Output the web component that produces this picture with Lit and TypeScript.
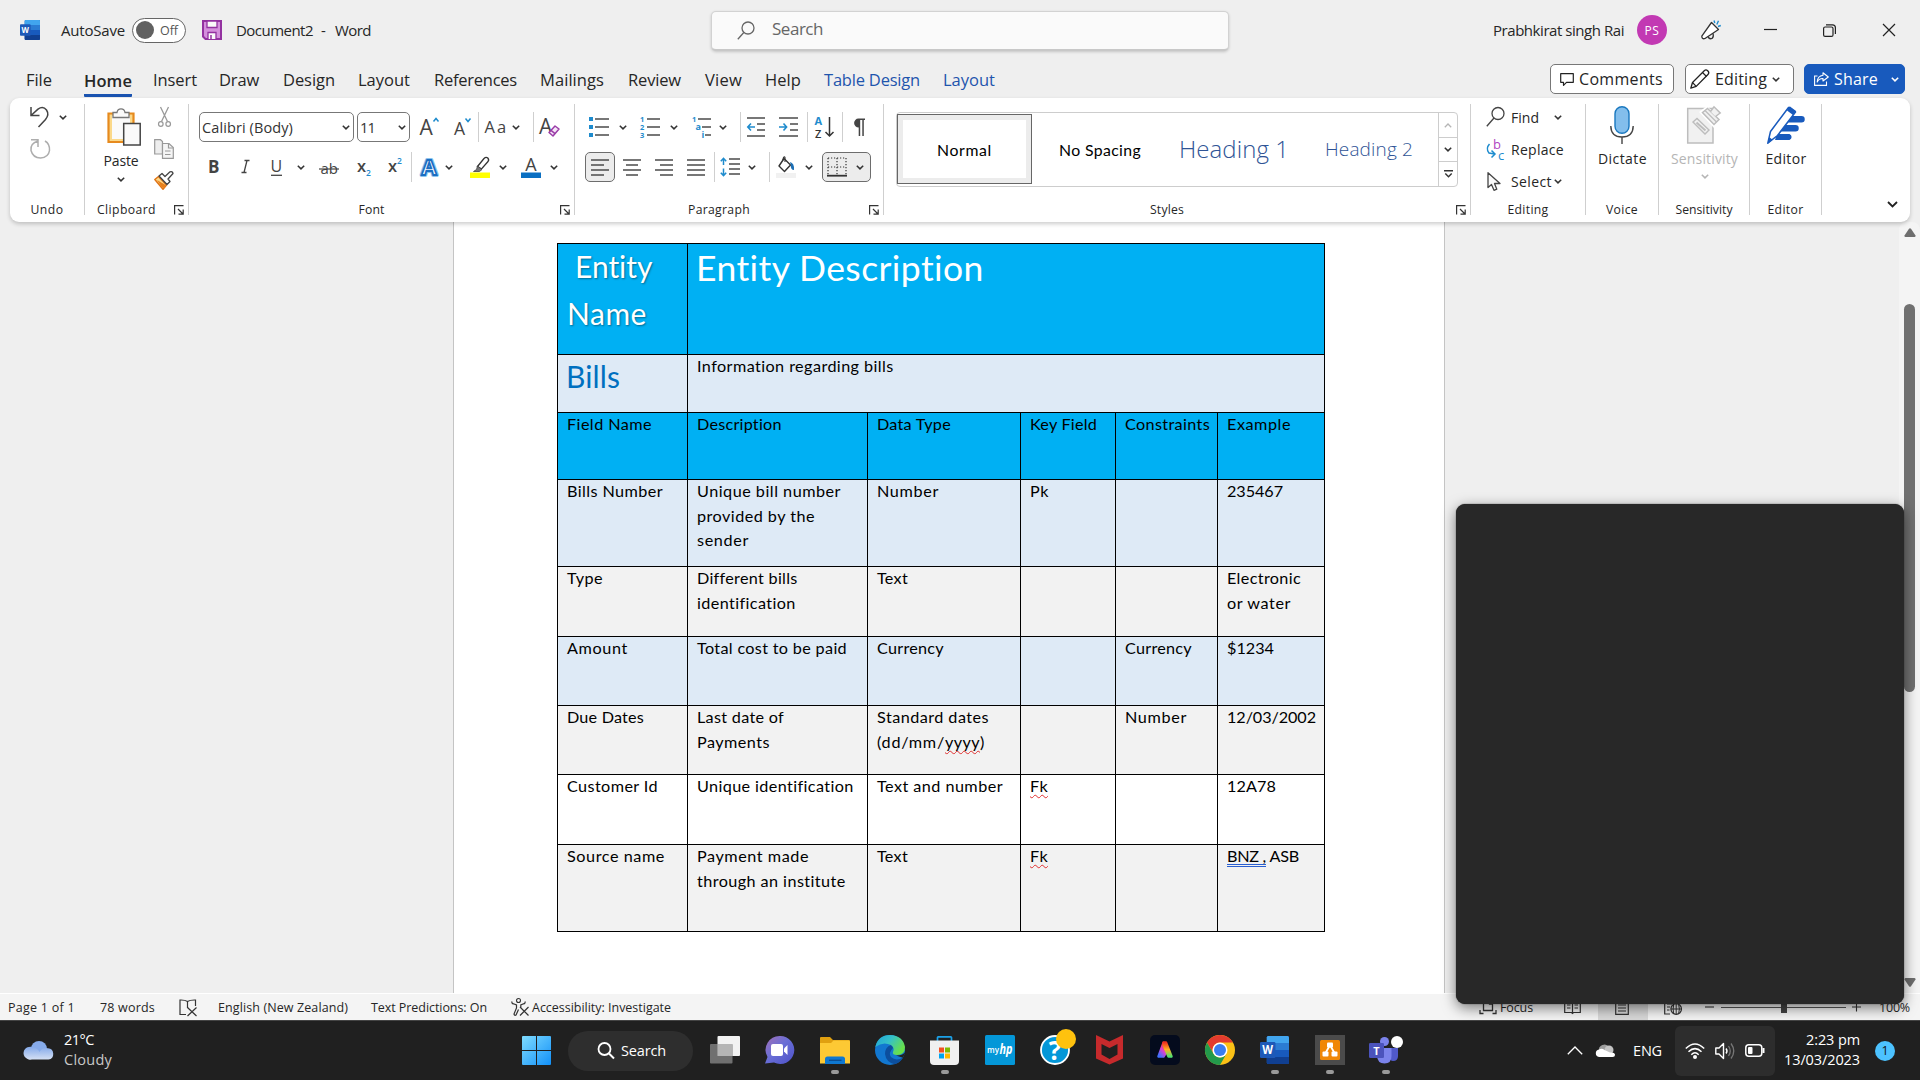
import { LitElement, html, svg, css, nothing } from "lit";
import { customElement } from "lit/decorators.js";

/* ---------- shared helpers ---------- */

const shared = css`
  :host { display: block; box-sizing: border-box; font-family: "Open Sans", "Noto Sans", sans-serif; color: #262626; }
  * { box-sizing: border-box; }
  svg { display: block; overflow: visible; flex: none; }
  .tx { display: inline-block; white-space: pre; }
  .strip { display: grid; align-items: center; justify-items: start; }
`;

/** Text whose tracking is computed so that it spans the given width. */
const tx = (s: string, w: number) => html`<span class="tx" data-w=${w}>${s}</span>`;

class FittedElement extends LitElement {
  protected firstUpdated() {
    this.renderRoot.querySelectorAll<HTMLElement>("[data-w]").forEach((el) => {
      const n = (el.textContent || "").length;
      const natural = el.getBoundingClientRect().width;
      const target = Number(el.dataset.w) + 1;
      if (n > 1) el.style.letterSpacing = `${((target - natural) / n).toFixed(3)}px`;
    });
  }
}

const ic = (w: number, h: number, body: unknown) =>
  html`<svg width=${w} height=${h} viewBox=${`0 0 ${w} ${h}`} fill="none" aria-hidden="true">${body}</svg>`;

const chev = (color = "#333", w = 8) =>
  ic(w, 5, svg`<path d=${`M.8 .7 L${w / 2} ${w / 2 - 0.1} L${w - 0.8} .7`} stroke=${color} stroke-width="1.5"/>`);
const sep = html`<span class="sep"></span>`;

const D = "#444";
const B = "#1e8bcd";
const G = "#adadad";

const wordLogo = (w: number, h: number) => html`<svg width=${w} height=${h} viewBox="0 0 30 28" preserveAspectRatio="none">
  <rect x="7" y="0" width="23" height="28" rx="1.5" fill="#185abd"/>
  <path d="M8.500 0H28.500Q30 0 30 1.500V7H7V1.500Q7 0 8.500 0Z" fill="#41a5ee"/>
  <rect x="7" y="7" width="23" height="7" fill="#2b7cd3"/>
  <rect x="7" y="14" width="23" height="7" fill="#185abd"/>
  <path d="M7 21H30V26.500Q30 28 28.500 28H8.500Q7 28 7 26.500Z" fill="#103f91"/>
  <rect x="0" y="6" width="16" height="16" rx="1.300" fill="#1d59b8"/>
  <text x="8" y="18.300" text-anchor="middle" font-family="Open Sans" font-weight="700" font-size="11.500" fill="#fff">W</text>
</svg>`;

/* ---------- title bar and tabs ---------- */

@customElement("word-titlebar")
class WordTitlebar extends FittedElement {
  static styles = [shared, css`
    .title { height: 60px; padding-left: 20px; font-size: 15px;
      grid-template-columns: 41px 71px 70px 34px 85px 14px 376px 782px 144px 64px 63px 59px 60px 1fr; }
    .toggle { width: 54px; height: 25px; border: 1.3px solid #666; border-radius: 13px; background: #fff; display: flex; align-items: center; padding-left: 3px; gap: 6px; font-size: 12.500px; color: #555; }
    .knob { width: 18px; height: 18px; border-radius: 50%; background: #616161; }
    .search { width: 518px; height: 40px; margin-top: 1px; background: #fafafa; border: 1px solid #d2d2d2; border-bottom: 2px solid #c8c8c8; border-radius: 5px; box-shadow: 0 1px 3px rgba(0,0,0,.18); display: flex; align-items: center; padding-left: 25px; gap: 17px; font-size: 17px; color: #666; }
    .search .tx { margin-top: -3px; }
    .avatar { width: 30px; height: 30px; border-radius: 50%; background: #c239b3; color: #fff; display: grid; place-items: center; font-size: 12px; }
    .tabs { height: 38px; padding-left: 26px; font-size: 16.500px;
      grid-template-columns: 58px 69px 66px 64px 75px 76px 106px 88px 77px 60px 59px 119px 607px 135px 119px 1fr; }
    .tab { padding-top: 0; }
    .on { font-weight: 600; border-bottom: 3px solid #1a53b0; border-radius: 1px; height: 35px; display: flex; align-items: center; padding-top: 6px; width: 48px; }
    .blue { color: #1f55ad; }
    .btn { height: 30px; border: 1px solid #777; border-radius: 5px; background: #fff; display: flex; align-items: center; font-size: 16px; }
    .comments { width: 124px; padding-left: 9px; gap: 5px; }
    .editing { width: 109px; padding-left: 4px; gap: 5px; }
    .share { width: 101px; padding-left: 9px; gap: 5px; background: #185abd; border-color: #185abd; color: #fff; }
    .share .last { margin-left: 8px; }
  `];
  render() {
    return html`
      <div class="strip title">
        ${wordLogo(20, 20)}
        ${tx("AutoSave", 63)}
        <div class="toggle"><span class="knob"></span>${tx("Off", 17)}</div>
        ${ic(20, 20, svg`<path d="M1 1H19V19H3.500L1 16.500Z" fill="#d48fdc" stroke="#9332a0" stroke-width="2"/><path d="M5 1H15V7.500H5Z" fill="#fafafa" stroke="#9332a0" stroke-width="1.300"/><path d="M6 19V12.500H14V19" fill="#fafafa" stroke="#9332a0" stroke-width="1.300"/><path d="M9 15V19" stroke="#9332a0" stroke-width="1.500"/>`)}
        ${tx("Document2", 76)}
        ${tx("-", 5)}
        ${tx("Word", 35)}
        <div class="search">
          ${ic(18, 19, svg`<circle cx="11" cy="7" r="6" stroke="#666" stroke-width="1.300"/><path d="M6.800 11.500L.8 18.300" stroke="#666" stroke-width="1.300"/>`)}
          ${tx("Search", 50)}
        </div>
        ${tx("Prabhkirat singh Rai", 130)}
        <div class="avatar">${tx("PS", 14)}</div>
        ${ic(20, 20, svg`<path d="M10.500 2.500L17.500 9.500L4 18.500Q1 19.500 .8 16.200Z" fill="#fff" stroke="#333" stroke-width="1.300" stroke-linejoin="round"/><path d="M7 16.500Q8 19.500 11 18.500Q13 17 12 13.300" stroke="#333" stroke-width="1.300"/><path d="M13 .5L13.800 3M17.500 .8L15.800 4.500M19.800 5.500L17 6.500" stroke="#1e8bcd" stroke-width="1.400"/>`)}
        ${ic(13, 12, svg`<path d="M0 5.500H13" stroke="#222" stroke-width="1.200"/>`)}
        ${ic(13, 13, svg`<rect x=".6" y="3" width="9.400" height="9.400" rx="1.500" stroke="#222" stroke-width="1.200"/><path d="M3 .8H9.500Q12.400 .8 12.400 3.700V10" stroke="#222" stroke-width="1.200"/>`)}
        ${ic(12, 12, svg`<path d="M0 0L12 12M12 0L0 12" stroke="#222" stroke-width="1.200"/>`)}
      </div>
      <div class="strip tabs">
        <span class="tab">${tx("File", 25)}</span>
        <span class="on">${tx("Home", 47)}</span>
        <span class="tab">${tx("Insert", 43)}</span>
        <span class="tab">${tx("Draw", 39)}</span>
        <span class="tab">${tx("Design", 51)}</span>
        <span class="tab">${tx("Layout", 51)}</span>
        <span class="tab">${tx("References", 82)}</span>
        <span class="tab">${tx("Mailings", 63)}</span>
        <span class="tab">${tx("Review", 52)}</span>
        <span class="tab">${tx("View", 36)}</span>
        <span class="tab">${tx("Help", 35)}</span>
        <span class="tab blue">${tx("Table Design", 95)}</span>
        <span class="tab blue">${tx("Layout", 51)}</span>
        <div class="btn comments">
          ${ic(14, 13, svg`<path d="M.7 .7H13.300V9.300H6.500L3.500 12.300V9.300H.7Z" stroke="#222" stroke-width="1.200" stroke-linejoin="round"/>`)}
          ${tx("Comments", 83)}
        </div>
        <div class="btn editing">
          ${ic(20, 20, svg`<path d="M.8 19.200L2.500 13.500L14.500 1.500Q16 .2 17.700 1.700Q19.600 3.500 18.200 5.200L6.200 17.400Z" stroke="#222" stroke-width="1.300" stroke-linejoin="round"/><path d="M12.500 3.500L16.500 7.500M2.500 13.500L6.200 17.400" stroke="#222" stroke-width="1.200"/>`)}
          ${tx("Editing", 51)}${chev("#333", 8)}
        </div>
        <div class="btn share">
          ${ic(15, 14, svg`<path d="M3.500 4H.6V13.400H12.500V9.500" stroke="#fff" stroke-width="1.100"/><path d="M9 .8L14.300 5L9 9V6.500Q5 6.300 3.200 10Q3.500 4 9 3.300Z" stroke="#fff" stroke-width="1.100" stroke-linejoin="round"/>`)}
          ${tx("Share", 43)}<span class="last">${chev("#fff", 8)}</span>
        </div>
      </div>`;
  }
}

/* ---------- ribbon icons ---------- */

const lines = (w: number, ys: [number, number, number][], c = "#555") =>
  svg`${ys.map(([x, y, l]) => svg`<path d=${`M${x} ${y}h${l}`} stroke=${c} stroke-width="1.600"/>`)}`;

const alignLeft = ic(18, 18, lines(18, [[0, 2, 18], [0, 7, 13], [0, 12, 18], [0, 17, 13]]));
const alignCenter = ic(18, 18, lines(18, [[0, 2, 18], [3, 7, 12], [0, 12, 18], [3, 17, 12]]));
const alignRight = ic(18, 18, lines(18, [[0, 2, 18], [5, 7, 13], [0, 12, 18], [5, 17, 13]]));
const justify = ic(18, 18, lines(18, [[0, 2, 18], [0, 7, 18], [0, 12, 18], [0, 17, 18]]));

const tn = (x: number, y: number, s: string, size: number, fill: string, weight = "400", extra = "") =>
  svg`<text x=${x} y=${y} font-size=${size} fill=${fill} font-weight=${weight} font-style=${extra || "normal"} font-family="Open Sans, sans-serif">${s}</text>`;

const bullets = ic(20, 20, svg`<rect x="0" y="0" width="4" height="4" fill=${B}/><rect x="0" y="8" width="4" height="4" fill=${B}/><rect x="0" y="16" width="4" height="4" fill=${B}/>${lines(20, [[6, 2, 14], [6, 10, 14], [6, 18, 14]])}`);
const numbering = ic(20, 20, svg`${tn(0, 5, "1", 7.5, B, "700")}${tn(0, 13, "2", 7.5, B, "700")}${tn(0, 21, "3", 7.5, B, "700")}${lines(20, [[7, 2, 13], [7, 10, 13], [7, 18, 13]])}`);
const multilevel = ic(20, 20, svg`${tn(0, 5, "1", 7.5, B, "700")}${tn(3.5, 13, "a", 9, B, "700")}${tn(9.5, 21, "i", 9, B, "700")}${lines(20, [[6, 2, 13], [10, 10, 9], [13, 18, 6]])}`);
const outdent = ic(19, 20, svg`${lines(19, [[0, 1, 18], [10, 7, 8], [10, 13, 8], [0, 19, 18]])}<path d="M8 10H1M4 6.500L.8 10L4 13.500" stroke=${B} stroke-width="1.600"/>`);
const indent = ic(20, 20, svg`${lines(19, [[0, 1, 19], [11, 7, 8], [11, 13, 8], [0, 19, 19]])}<path d="M0 10H7M4.500 6.500L7.600 10L4.500 13.500" stroke=${B} stroke-width="1.600"/>`);
const sortIcon = ic(20, 22, svg`${tn(0.5, 9, "A", 11, B, "700")}${tn(1, 21.5, "Z", 11, "#333", "600")}<path d="M15.500 1V20M11.500 16L15.500 20L19.500 16" stroke="#333" stroke-width="1.500"/>`);
const pilcrow = ic(13, 18, svg`<path d="M6.500 .5H13V2H11.800V18H10.300V2H8.200V18H6.700V9.500A4.500 4.500 0 0 1 6.500 .5Z" fill="#444"/>`);
const spacing = ic(21, 20, svg`${lines(20, [[9, 2, 11], [9, 7, 11], [9, 12, 11], [9, 17, 11]])}<path d="M3.500 1.500V8M.8 4.200L3.500 1.300L6.200 4.200M3.500 11.500V18.500M.8 15.700L3.500 18.600L6.200 15.700" stroke=${B} stroke-width="1.500"/>`);
const shading = ic(20, 22, svg`<path d="M8 2.500L14.500 9L8.500 15.500L3 10Z" stroke="#333" stroke-width="1.400" stroke-linejoin="round"/><path d="M9 6V1.500Q8.500 0 7.500 1.500L6.500 5" stroke="#333" stroke-width="1.100"/><path d="M14 6Q18.500 7 18 14Q14.500 14 14.800 9Z" fill="#1c6fb5"/><rect x="0" y="17" width="20" height="5" fill="#f1f1f1"/>`);
const borders = ic(20, 20, svg`<path d="M1 1H19M1 10H19M1 1V18M10 1V18M19 1V18" stroke="#333" stroke-width="1.200" stroke-dasharray="1.200 1.800"/><path d="M0 18.700H20" stroke="#333" stroke-width="1.800"/>`);

const clearFmt = ic(20, 20, svg`${tn(-1, 17, "A", 21, D)}<path d="M9 15.500L15 9L19 12L13 19Z" fill="#f5e6f7" stroke="#9b3da8" stroke-width="1.500" stroke-linejoin="round"/><path d="M11 13.300L15.300 16.800" stroke="#9b3da8" stroke-width="1.500"/>`);
const grow = ic(20, 22, svg`${tn(-0.5, 19, "A", 21, D)}<path d="M13.500 5.500L16 2.500L18.500 5.500" stroke=${B} stroke-width="1.500"/>`);
const shrink = ic(20, 22, svg`${tn(0, 19, "A", 17.5, D)}<path d="M11.500 2.500L14 5.500L16.500 2.500" stroke=${B} stroke-width="1.500"/>`);
const changeCase = ic(22, 20, svg`${tn(-0.5, 16, "A", 16.5, D)}${tn(12, 16, "a", 16.5, D)}`);
const bold = ic(12, 20, tn(0, 15.5, "B", 17, D, "700"));
const italic = ic(12, 20, svg`<path d="M3.500 3.500H8.500M.5 15.500H5.500M6 3.500L3 15.500" stroke=${D} stroke-width="1.300"/>`);
const underline = ic(14, 20, svg`${tn(0.5, 15, "U", 16, D)}<path d="M1 18.300H12" stroke=${D} stroke-width="1.300"/>`);
const strike = ic(20, 20, svg`${tn(1.5, 16.5, "ab", 15, D)}<path d="M0 12H20" stroke=${D} stroke-width="1.200"/>`);
const subscript = ic(16, 22, svg`${tn(0, 16, "x", 16.5, D, "600")}${tn(9, 20, "2", 8.5, B, "600")}`);
const superscript = ic(16, 22, svg`${tn(0, 16, "x", 16.5, D, "600")}${tn(9, 8, "2", 8.5, B, "600")}`);
const effects = html`<svg width="20" height="22" viewBox="0 0 20 22"><text x="1.500" y="19" font-size="22" font-family="Open Sans" font-weight="700" fill="#fff" stroke="#8cc4ee" stroke-width="4" stroke-linejoin="round">A</text><text x="1.500" y="19" font-size="22" font-family="Open Sans" font-weight="700" fill="#fff" stroke="#1b6ec2" stroke-width="1.800">A</text></svg>`;
const highlight = ic(20, 21, svg`<path d="M7.500 9.500L14 1.500Q16 -.5 17.800 1Q19.500 3 17.800 4.800L11.500 12L7.500 9.500Z" stroke="#333" stroke-width="1.300"/><path d="M7.500 9L12 12.500L9.500 14.500H3.500L6.500 12.500Z" fill="#777" stroke="#444" stroke-width=".8"/><rect x="0" y="15.500" width="20" height="5.500" fill="#ff0"/>`);
const fontColor = ic(20, 21, svg`${tn(4.2, 13.5, "A", 18, D)}<rect x="0" y="15.500" width="20" height="5.500" fill="#0a6fc2"/>`);

const undo = ic(19, 20, svg`<path d="M1 0V8.500H9.500M1 8.500L8 2.200Q13 -1.500 16.500 3Q19.500 7.500 15.500 12.500L8.500 20" stroke="#444" stroke-width="1.500"/>`);
const redo = ic(21, 20, svg`<path d="M1 .8H8V8M8 .8L7.800 2Q0 4.500 1 11.500Q3 19 10.500 19Q18.500 18.500 19.500 11.500Q20 5 15 2" stroke=${G} stroke-width="1.500"/>`);
const paste = ic(34, 38, svg`<path d="M1.500 5.500H26.500V34H1.500Z" fill="#fbd98a" stroke="#e68a1e" stroke-width="2.200"/><rect x="5" y="8" width="18" height="23" fill="#fafafa"/><path d="M6 9.500V4.500H10Q10.500 .8 14 .8T18 4.500H22V9.500Z" fill="#fafafa" stroke="#777" stroke-width="1.300"/><rect x="16.700" y="15.500" width="16.500" height="21.500" fill="#fafafa" stroke="#444" stroke-width="1.500"/>`);
const cut = ic(13, 20, svg`<path d="M2.500 0L9.500 14.500M10.500 0L3.500 14.500" stroke="#999" stroke-width="1.300"/><circle cx="2.800" cy="17" r="2.300" stroke="#999" stroke-width="1.200"/><circle cx="10.200" cy="17" r="2.300" stroke="#999" stroke-width="1.200"/>`);
const copy = ic(20, 20, svg`<path d="M.7 .7H6.500L8.500 2.500V15H.7Z" fill="#eee" stroke="#999" stroke-width="1.200"/><path d="M8.500 4.500H15L19.300 8.500V19.300H8.500Z" fill="#f5f5f5" stroke="#999" stroke-width="1.200"/><path d="M14.500 4.500V9H19M11 12H16.500M11 15.500H16.500" stroke="#999" stroke-width="1.200"/>`);
const painter = ic(20, 19, svg`<path d="M.8 8.500L4.500 5.500L12.500 14L9 18.200Z" fill="#fbd98a" stroke="#e07416" stroke-width="1.500" stroke-linejoin="round"/><path d="M3 9L8 16.500L10.500 17L11.500 14Z" fill="#e8801c"/><path d="M5 5L8 2.500L11 5.500L16 .8Q18.500 0 19 2.500L14 8L16 10.500L13 13.500Z" fill="#fff" stroke="#444" stroke-width="1.300" stroke-linejoin="round"/>`);
const launcher = ic(10, 10, svg`<path d="M9.500 .6H.6V9.500M4 4L8.500 8.500M9.200 4.500V9.200H4.500" stroke="#333" stroke-width="1.200"/>`);

const find = ic(19, 20, svg`<circle cx="12" cy="6.500" r="6" stroke="#444" stroke-width="1.300"/><path d="M8 11L.8 19.300" stroke="#444" stroke-width="1.300"/>`);
const replace = ic(19, 21, svg`${tn(7, 10, "b", 13, "#b146c2")}${tn(12, 20.5, "c", 13, B)}<path d="M3.500 5Q-.5 9.500 3 14L8.500 15M5.500 11.500L9 15L5.500 18.500" stroke=${B} stroke-width="1.500"/>`);
const pointer = ic(14, 19, svg`<path d="M1 .8V15.500L4.500 12.500L7 18.300L9.800 17.200L7.500 11.500H13Z" fill="#fafafa" stroke="#444" stroke-width="1.300" stroke-linejoin="round"/>`);
const mic = ic(24, 38, svg`<rect x="5" y=".7" width="14" height="26.500" rx="7" fill="#83beec" stroke="#1a78bf" stroke-width="1.400"/><path d="M.8 20Q1 31 12 31T23.200 20M12 31V38" stroke="#444" stroke-width="1.400"/>`);
const sensitivity = ic(34, 38, svg`<path d="M.7 2.500H26V37H.7Z" fill="#f1f1f1" stroke="#bdbdbd" stroke-width="1.500"/><path d="M12 6L20 0L34 14L27 22Z" fill="#fff"/><path d="M6 16L10 12.500L22 24L18 28Z" fill="#f1f1f1" stroke="#bdbdbd" stroke-width="1.400"/><path d="M9.500 16.500L18.500 24.500" stroke="#bdbdbd" stroke-width="2"/><path d="M15.500 6.500L20.500 2.500L32 13.500L27 18.500Z" fill="#f1f1f1" stroke="#bdbdbd" stroke-width="1.500"/><path d="M23.500 5.500L27 .8L33.200 7L28.500 10.500" fill="#f1f1f1" stroke="#bdbdbd" stroke-width="1.500"/><path d="M18 4.500L29.500 16" stroke="#bdbdbd" stroke-width="1.300"/>`);
const editorIcon = ic(38, 38, svg`<path d="M20 10H34.500A3.200 3.200 0 0 1 34.500 16.500H20ZM16 19H28.500A3.200 3.200 0 0 1 28.500 25.500H14ZM10 28H22.500A3.200 3.200 0 0 1 22.500 34H8Z" fill="#185abd"/><path d="M.8 37.200L3.500 25.500L21.500 1.500L28.500 6L10.500 29.500Z" fill="#fff" stroke="#185abd" stroke-width="1.500" stroke-linejoin="round"/><path d="M21.500 1L23 .5L29 5L26 9L20 4.500Z" fill="#185abd"/><path d="M.8 37.500L2.300 31L5.500 33.800Z" fill="#185abd"/>`);

/* ---------- ribbon ---------- */

@customElement("word-ribbon")
class WordRibbon extends FittedElement {
  static styles = [shared, css`
    :host { padding: 0 10px; position: relative; z-index: 1; }
    .bar { height: 124px; background: #fff; border-radius: 9px; padding-top: 6px; box-shadow: 0 2px 4px rgba(0,0,0,.2); display: grid;
      grid-template-columns: 75px 104px 386px 309px 587px 115px 73px 91px 72px 1fr; }
    .group { height: 118px; display: flex; flex-direction: column; background: linear-gradient(#cfcfcf,#cfcfcf) right top / 1px 111px no-repeat; min-width: 0; }
    .group.end { background: none; align-items: flex-end; justify-content: flex-end; padding: 0 12px 14px 0; }
    .foot { margin-top: auto; margin-bottom: 5px; height: 16px; display: flex; align-items: center; font-size: 12.200px; }
    .foot .label { flex: 1; display: flex; justify-content: center; padding-right: 1px; }
    .foot .more { margin: 2px 5px 0 5px; }
    .sep { width: 1px; height: 30px; background: #cfcfcf; }
    .rows { padding-top: 8px; display: grid; grid-auto-rows: 30px; row-gap: 10px; }
    .undo { padding: 3px 0 0 20px; display: grid; grid-auto-rows: 20px; row-gap: 12px; }
    .undo .strip { grid-template-columns: 29px 1fr; }
    .clip { display: grid; grid-template-columns: 54px 1fr; padding: 3px 0 0 15px; }
    .col { display: flex; flex-direction: column; align-items: center; font-size: 14px; }
    .pastecol { width: 42px; padding-top: 1px; }
    .pastecol > :first-child { margin-left: 6px; }
    .pastecol .tx { margin: 5px 0 6px; line-height: 20px; }
    .tools { display: grid; grid-auto-rows: 20px; row-gap: 12px; justify-items: center; width: 20px; }
    .f1 { padding-left: 10px; grid-template-columns: 158px 63px 34px 23.500px 7.500px 27px 20.500px 7.500px 1fr; }
    .f2 { padding-left: 19px; grid-template-columns: 33px 29px 27px 22px 38px 31px 22.500px 9.500px 25px 25px 29px 22px 29px 1fr; }
    .box { height: 30px; border: 1px solid #777; border-radius: 5px; background: #fff; display: flex; align-items: center; justify-content: space-between; padding: 0 3px 0 2px; font-size: 14.500px; color: #333; }
    .fname { width: 155px; } .fsize { width: 53px; }
    .p1 { padding-left: 14px; grid-template-columns: 30px 21px 30px 22px 27px 20.500px 7.500px 32px 27.500px 7.500px 27.500px 10.500px 1fr; }
    .p2 { padding-left: 10px; grid-template-columns: 38px 32px 32px 26.500px 6.500px 28px 20.500px 7.500px 29px 17px 1fr; }
    .sel { height: 30px; border: 1px solid #6d6d6d; border-radius: 5px; background: #ececec; display: flex; align-items: center; }
    .sel.a { width: 30px; justify-content: center; }
    .sel.b { width: 49px; padding-left: 4px; gap: 9px; }
    .gallery { margin: 8px 0 0 12px; width: 562px; height: 75px; border: 1px solid #cdcdcd; border-radius: 4px; font-family: Lato, "Open Sans", sans-serif; color: #000;
      display: grid; align-items: center; grid-template-columns: 162px 120px 146px 113px 1fr; font-size: 15.800px; }
    .normal { width: 135px; height: 70px; border: 1px solid #666; box-shadow: inset 0 0 0 5px #ececec; display: grid; place-items: center; margin-top: -1px; }
    .h1 { font-size: 24px; color: #2f5496; } .h2 { font-size: 19px; color: #2f5496; }
    .h1, .h2 { font-family: "Open Sans"; font-weight: 300; margin-top: -2px; }
    .scroll { height: 73px; border-left: 1px solid #cdcdcd; display: grid; grid-template-rows: 25px 24px 1fr; }
    .scroll span { display: grid; place-items: center; border-bottom: 1.500px solid #cdcdcd; }
    .scroll span:last-child { border: 0; }
    .edit { padding: 3px 0 0 15px; display: grid; grid-template-rows: 20px 22px 22px; row-gap: 11px; font-size: 14px; }
    .edit .strip { grid-template-columns: 25px 43px 1fr; }
    .edit .strip.sm { grid-template-columns: 24px 43px 1fr; padding-left: 1px; margin-top: -2px; }
    .big { padding-top: 2px; }
    .big > :first-child { margin-right: 1px; }
    .big .tx { margin: 5px 0 5px; line-height: 20px; }
    .dim { color: #b5b5b5; }
  `];
  private foot(label: unknown, more = false) {
    return html`<div class="foot"><span class="label">${label}</span>${more ? html`<span class="more">${launcher}</span>` : nothing}</div>`;
  }
  render() {
    return html`<div class="bar">
      <section class="group">
        <div class="undo"><div class="strip">${undo}${chev()}</div><div class="strip">${redo}</div></div>
        ${this.foot(tx("Undo", 32))}
      </section>
      <section class="group">
        <div class="clip">
          <div class="col pastecol">${paste}${tx("Paste", 34)}${chev()}</div>
          <div class="tools">${cut}${copy}${painter}</div>
        </div>
        ${this.foot(tx("Clipboard", 58), true)}
      </section>
      <section class="group">
        <div class="rows">
          <div class="strip f1">
            <div class="box fname">${tx("Calibri (Body)", 90)}${chev()}</div>
            <div class="box fsize">${tx("11", 14)}${chev()}</div>
            ${grow}${shrink}${sep}${changeCase}${chev()}${sep}${clearFmt}
          </div>
          <div class="strip f2">
            ${bold}${italic}${underline}${chev()}${strike}${subscript}${superscript}${sep}${effects}${chev()}${highlight}${chev()}${fontColor}${chev()}
          </div>
        </div>
        ${this.foot(tx("Font", 25), true)}
      </section>
      <section class="group">
        <div class="rows">
          <div class="strip p1">
            ${bullets}${chev()}${numbering}${chev()}${multilevel}${chev()}${sep}${outdent}${indent}${sep}${sortIcon}${sep}${pilcrow}
          </div>
          <div class="strip p2">
            <span class="sel a">${alignLeft}</span>${alignCenter}${alignRight}${justify}${sep}${spacing}${chev()}${sep}${shading}${chev()}<span class="sel b">${borders}${chev()}</span>
          </div>
        </div>
        ${this.foot(tx("Paragraph", 61), true)}
      </section>
      <section class="group">
        <div class="gallery">
          <span class="normal">${tx("Normal", 54)}</span>
          <span>${tx("No Spacing", 81)}</span>
          <span class="h1">${tx("Heading 1", 109)}</span>
          <span class="h2">${tx("Heading 2", 87)}</span>
          <span class="scroll">
            <span>${ic(8, 5, svg`<path d="M.8 4.300L4 1L7.200 4.300" stroke="#b5b5b5" stroke-width="1.300"/>`)}</span>
            <span>${chev()}</span>
            <span>${ic(9, 8, svg`<path d="M0 .7H9M1.300 3.500L4.500 6.800L7.700 3.500" stroke="#333" stroke-width="1.400"/>`)}</span>
          </span>
        </div>
        ${this.foot(tx("Styles", 33), true)}
      </section>
      <section class="group">
        <div class="edit">
          <div class="strip">${find}${tx("Find", 27)}${chev()}</div>
          <div class="strip">${replace}${tx("Replace", 52)}</div>
          <div class="strip sm">${pointer}${tx("Select", 40)}${chev()}</div>
        </div>
        ${this.foot(tx("Editing", 40))}
      </section>
      <section class="group">
        <div class="col big">${mic}${tx("Dictate", 48)}</div>
        ${this.foot(tx("Voice", 31))}
      </section>
      <section class="group">
        <div class="col big dim">${sensitivity}${tx("Sensitivity", 66)}${chev("#b5b5b5")}</div>
        ${this.foot(tx("Sensitivity", 56))}
      </section>
      <section class="group">
        <div class="col big">${editorIcon}${tx("Editor", 40)}</div>
        ${this.foot(tx("Editor", 35))}
      </section>
      <section class="group end">${ic(11, 7, svg`<path d="M1 1L5.500 5.500L10 1" stroke="#222" stroke-width="1.800"/>`)}</section>
    </div>`;
  }
}

/* ---------- document ---------- */

type Line = [string, number] | { node: unknown };
type Row = { tone: string; cells: Line[][] };

const wavy = (s: string, w: number) => html`<span class="tx wavy" data-w=${w}>${s}</span>`;

const ROWS: Row[] = [
  { tone: "head", cells: [[["Field Name", 84]], [["Description", 84]], [["Data Type", 73]], [["Key Field", 66]], [["Constraints", 84]], [["Example", 63]]] },
  { tone: "pale", cells: [[["Bills Number", 95]], [["Unique bill number", 143], ["provided by the", 117], ["sender", 51]], [["Number", 61]], [["Pk", 18]], [], [["235467", 55]]] },
  { tone: "grey", cells: [[["Type", 35]], [["Different bills", 99], ["identification", 98]], [["Text", 30]], [], [], [["Electronic", 73], ["or water", 63]]] },
  { tone: "pale", cells: [[["Amount", 60]], [["Total cost to be paid", 149]], [["Currency", 66]], [], [["Currency", 66]], [["$1234", 46]]] },
  { tone: "grey", cells: [[["Due Dates", 76]], [["Last date of", 86], ["Payments", 72]], [["Standard dates", 111], { node: html`${tx("(dd/mm/", 67)}${wavy("yyyy", 34)}${tx(")", 4)}` }], [], [["Number", 61]], [["12/03/2002", 88]]] },
  { tone: "plain", cells: [[["Customer Id", 90]], [["Unique identification", 156]], [["Text and number", 125]], [{ node: wavy("Fk", 17) }], [], [["12A78", 48]]] },
  { tone: "grey", cells: [[["Source name", 97]], [["Payment made", 111], ["through an institute", 148]], [["Text", 30]], [{ node: wavy("Fk", 17) }], [], [{ node: html`<span class="tx gram" data-w="38">BNZ ,</span>${tx(" ASB", 32)}` }]] },
];

@customElement("word-document")
class WordDocument extends FittedElement {
  static styles = [shared, css`
    :host { height: 771px; display: grid; grid-template-columns: 453px 992px 1fr 21px; background: #efefef; overflow: hidden; }
    .page { grid-column: 2; background: #fff; border: solid #c4c4c4; border-width: 0 1px; padding: 21px 0 0 103px; font-family: Lato, sans-serif; color: #000; }
    .grid { width: 768px; background: #000; padding: 1px; gap: 1px; display: grid;
      grid-template-columns: 129px 179px 152px 94px 101px 106px;
      grid-template-rows: 110px 57px 66px 86px 69px 68px 68px 69px 86px; }
    .cell { padding-left: 9px; font-size: 16.200px; line-height: 24.500px; min-width: 0; }
    .line { margin-top: -1px; margin-bottom: 1px; white-space: nowrap; height: 24.500px; }
    .wide { grid-column: 2 / -1; }
    .head { background: #00b0f3; } .pale { background: #deeaf6; } .grey { background: #f2f2f2; } .plain { background: #fff; }
    .cell.big { color: #fff; line-height: 47.700px; font-size: 30px; text-shadow: 1px 1px 2px rgba(0,0,0,.4); padding-left: 9px; }
    .big div { margin-top: -1.500px; margin-bottom: 1.500px; height: 47.700px; }
    .big .first { padding-left: 8px; }
    .cell.desc { color: #fff; font-size: 35.500px; line-height: 48px; padding-left: 8px; }
    .cell.bills { color: #0070c0; font-size: 30px; line-height: 42px; padding-left: 8px; }
    .wavy { text-decoration: underline wavy #e03030 1.300px; text-underline-offset: 2px; text-decoration-skip-ink: none; }
    .gram { text-decoration: underline double #2a5fd0 1px; text-underline-offset: 2px; text-decoration-skip-ink: none; }
    .scrollbar { grid-column: 4; background: #f4f4f4; border-radius: 8px 8px 0 0; display: flex; flex-direction: column; align-items: center; padding: 6px 0 6px 0; }
    .thumb { width: 11px; height: 388px; border-radius: 6px; background: #707070; margin-top: 67px; }
    .down { margin-top: auto; }
  `];
  render() {
    return html`
      <div class="page">
        <div class="grid">
          <div class="cell head big"><div class="first">${tx("Entity", 77)}</div><div>${tx("Name", 79)}</div></div>
          <div class="cell head wide desc">${tx("Entity Description", 288)}</div>
          <div class="cell pale bills">${tx("Bills", 53)}</div>
          <div class="cell pale wide"><div class="line">${tx("Information regarding bills", 196)}</div></div>
          ${ROWS.map((r) => r.cells.map((c) => html`<div class="cell ${r.tone}">${c.map((l) =>
            html`<div class="line">${Array.isArray(l) ? tx(l[0], l[1]) : l.node}</div>`)}</div>`))}
        </div>
      </div>
      <div class="scrollbar">
        ${ic(12, 9, svg`<path d="M5 .8Q6 -.4 7 .8L11.500 7.500Q11.800 9 10.500 9H1.500Q.2 9 .5 7.500Z" fill="#6e6e6e"/>`)}
        <span class="thumb"></span>
        <span class="down">${ic(12, 9, svg`<path d="M5 8.200Q6 9.400 7 8.200L11.500 1.500Q11.800 0 10.500 0H1.500Q.2 0 .5 1.500Z" fill="#6e6e6e"/>`)}</span>
      </div>`;
  }
}

/* ---------- status bar ---------- */

@customElement("word-statusbar")
class WordStatusbar extends FittedElement {
  static styles = [shared, css`
    .status { height: 27px; background: #f4f4f4; border-top: 1px solid #fff; padding-left: 8px; font-size: 12.500px;
      grid-template-columns: 92px 79px 39px 153px 140px 21px 947px 21px 64px 34px 66px 41px 16px 131px 27px 1fr; }
    .view { width: 50px; height: 26px; background: #d8d8d8; display: grid; place-items: center; padding-right: 2px; }
    .zoom { width: 125px; height: 11px; display: grid; align-items: center; background: linear-gradient(#555,#555) 0 5px / 125px 1px no-repeat; }
    .zoom span { width: 6px; height: 11px; background: #444; margin-left: 60px; }
  `];
  render() {
    return html`<div class="strip status">
      ${tx("Page 1 of 1", 66)}
      ${tx("78 words", 54)}
      ${ic(18, 17, svg`<path d="M8.500 2.500Q6 .8 1 1V15.500H7M8.500 2.500Q11 .8 16.500 1V7M8.500 2.500V9" stroke="#333" stroke-width="1.200"/><path d="M8.500 8.500L17.500 17M17.500 8.500L8.500 17" stroke="#333" stroke-width="1.200"/>`)}
      ${tx("English (New Zealand)", 129)}
      ${tx("Text Predictions: On", 115)}
      ${ic(18, 18, svg`<circle cx="7.500" cy="2.500" r="2" stroke="#333" stroke-width="1.100"/><path d="M1 3.500Q.5 5.500 2.500 5.800L5.500 7V10L3 16Q3.500 18 5 17L7.500 11.500M14 3.500Q14.500 5.500 12.500 5.800L9.800 7V9.500" stroke="#333" stroke-width="1.200"/><path d="M9 9L17.500 17.500M17.500 9L9 17.500" stroke="#333" stroke-width="1.200"/>`)}
      ${tx("Accessibility: Investigate", 138)}
      ${ic(18, 14, svg`<path d="M4.500 1H13.500V10.500H4.500ZM1 10V13.500H4.500M17 10V13.500H13.500M10.500 1V4H13.500" stroke="#333" stroke-width="1.300"/>`)}
      ${tx("Focus", 32)}
      ${ic(17, 14, svg`<path d="M8.500 2.500V13.500M.7 1H7.500L8.500 2L9.500 1H16.300V12.500H9.500L8.500 13.500L7.500 12.500H.7ZM3 5H6.500M3 8H6.500M10.500 5H14M10.500 8H14" stroke="#333" stroke-width="1.200"/>`)}
      <span class="view">${ic(14, 15, svg`<path d="M.7 .7H13.300V14.300H.7ZM3 5H11M3 8H11M3 11H11" stroke="#333" stroke-width="1.200"/>`)}</span>
      ${ic(18, 15, svg`<path d="M6 14H.7V1H12V3M3 4H8M3 7H6M3 10H5.500" stroke="#333" stroke-width="1.200"/><circle cx="12.200" cy="9" r="5.300" stroke="#333" stroke-width="1.200"/><path d="M7 9H17.500M12.200 3.700V14.300M9.700 4.500Q8.500 9 9.700 13.500M14.700 4.500Q16 9 14.700 13.500" stroke="#333" stroke-width="1"/>`)}
      ${ic(9, 10, svg`<path d="M0 5H9" stroke="#333" stroke-width="1.100"/>`)}
      <span class="zoom"><span></span></span>
      ${ic(9, 10, svg`<path d="M0 5H9M4.500 .5V9.500" stroke="#333" stroke-width="1.100"/>`)}
      ${tx("100%", 30)}
    </div>`;
  }
}

/* ---------- taskbar ---------- */

@customElement("win-taskbar")
class WinTaskbar extends FittedElement {
  static styles = [shared, css`
    :host { position: relative; z-index: 3; }
    .bar { height: 60px; background: #202020; border-top: 1px solid #444; color: #fff; padding-left: 25px; font-size: 14.500px;
      grid-template-columns: 39px 458px 46px 142px 55px 55px 55px 55px 55px 55px 56px 54px 55px 55px 55px 54px 198px 28px 38px 42px 109px 91px 1fr; }
    .two { display: flex; flex-direction: column; align-items: flex-start; line-height: 20px; margin-top: -2px; }
    .two .soft { color: #c8c8c8; }
    .two.right { align-items: flex-end; width: 76px; }
    .pill { width: 125px; height: 40px; border-radius: 20px; background: #2e2e2e; display: flex; align-items: center; padding-left: 29px; gap: 6px; font-size: 14.500px; }
    .app { height: 59px; padding-top: 14px; display: grid; grid-template-rows: 30px 4px; row-gap: 5px; justify-items: center; align-items: center; }
    .dot { width: 8px; height: 4px; border-radius: 2px; background: #9a9a9a; }
    .tray { width: 100px; height: 50px; border-radius: 6px; background: #2d2d2d; display: flex; align-items: center; padding-left: 10px; gap: 10px; }
    .badge { width: 20px; height: 20px; border-radius: 50%; background: #4cc2ff; color: #111; display: grid; place-items: center; font-size: 12.500px; }
  `];
  private app(icon: unknown, running = false) {
    return html`<div class="app">${icon}${running ? html`<span class="dot"></span>` : nothing}</div>`;
  }
  render() {
    return html`<div class="strip bar">
      ${ic(30, 20, svg`<defs><linearGradient id="cl" x1="0" y1="0" x2="0" y2="1"><stop offset="0" stop-color="#83a9ea"/><stop offset="1" stop-color="#d5e0f4"/></linearGradient></defs><circle cx="14" cy="8" r="8" fill="#86abeb"/><path d="M7 18.500A7 6.500 0 1 1 9 6.500Q13 7.500 14.500 11Q17 6 23 7.200A5.700 5.700 0 0 1 23.500 18.500Z" fill="url(#cl)"/>`)}
      <div class="two">${tx("21°C", 29)}<span class="soft">${tx("Cloudy", 47)}</span></div>
      ${ic(29, 29, svg`<defs><linearGradient id="wn" x1="0" y1="0" x2="1" y2="1"><stop offset="0" stop-color="#7fdcff"/><stop offset="1" stop-color="#1290f8"/></linearGradient></defs><path d="M0 1Q0 0 1 0H14V14H0ZM15 0H28Q29 0 29 1V14H15ZM0 15H14V29H1Q0 29 0 28ZM15 15H29V28Q29 29 28 29H15Z" fill="url(#wn)"/>`)}
      <div class="pill">${ic(18, 18, svg`<circle cx="7.500" cy="7" r="6" stroke="#fff" stroke-width="1.800"/><path d="M12 11.500L17 16.500" stroke="#fff" stroke-width="2"/>`)}${tx("Search", 44)}</div>
      ${this.app(ic(30, 28, svg`<rect x="7.500" y="0" width="22.500" height="20" rx="1" fill="#f2f2f2"/><rect x="0" y="8" width="22.500" height="19.500" rx="1" fill="#777" fill-opacity=".92"/><rect x="7.500" y="8" width="15" height="12" fill="#b5b5b5"/>`))}
      ${this.app(ic(29, 28, svg`<defs><linearGradient id="ch" x1="0" y1="0" x2="1" y2="1"><stop offset="0" stop-color="#a36fb5"/><stop offset=".45" stop-color="#6a6fd6"/><stop offset="1" stop-color="#4c50c8"/></linearGradient></defs><path d="M15 0A14 14 0 1 1 9 26.500L0 27.500L2.500 21A14 14 0 0 1 15 0Z" fill="url(#ch)"/><rect x="6" y="8" width="12" height="12" rx="2" fill="#fff"/><path d="M19 12.500L22.500 9V19L19 15.500Z" fill="#fff"/>`))}
      ${this.app(ic(30, 27, svg`<path d="M0 1Q0 0 1 0H10L13 3H29Q30 3 30 4V9H0Z" fill="#e0a010"/><path d="M0 6H11L13.500 3.500H29Q30 3.500 30 5V26.500H0Z" fill="#fdc934"/><path d="M5 27V22Q5 19.500 7.500 19.500H22.500Q25 19.500 25 22V27Z" fill="#0f78d0"/><path d="M9 23.300H21.500" stroke="#0a4e94" stroke-width="1.400"/>`), true)}
      ${this.app(ic(30, 30, svg`<defs><linearGradient id="e1" x1="0" y1="0" x2="1" y2=".5"><stop offset="0" stop-color="#1fa3d8"/><stop offset=".5" stop-color="#35c1c8"/><stop offset="1" stop-color="#68e04a"/></linearGradient></defs><circle cx="15" cy="15" r="15" fill="#1277d0"/><path d="M16 10Q10 12 10 19Q11 27 19.500 29.300Q25.500 27.500 28 22.500Q21 26.500 16 22Q13 18 18 13Q18 11 16 10Z" fill="#0c4f9e"/><path d="M.3 12Q3 0 15 0Q28 .5 30 12Q30 20 22 20Q17 20 18 17Q20 13 16 10Q8 6 .3 12Z" fill="url(#e1)"/><path d="M30.500 17Q27 21 21 20.500L28 22.700Z" fill="#202020"/>`))}
      ${this.app(ic(29, 29, svg`<path d="M7.500 6V1.500Q7.500 .8 8.200 .8H20.800Q21.500 .8 21.500 1.500V6" stroke="#1ba1e8" stroke-width="1.700"/><path d="M0 4.500H29V25Q29 29 25 29H4Q0 29 0 25Z" fill="#f0f0f0"/><rect x="9" y="11.500" width="5" height="5" fill="#f25022"/><rect x="15" y="11.500" width="5" height="5" fill="#7fba00"/><rect x="9" y="17.500" width="5" height="5" fill="#00a4ef"/><rect x="15" y="17.500" width="5" height="5" fill="#ffb900"/>`), true)}
      ${this.app(ic(30, 30, svg`<rect width="30" height="30" rx="1.500" fill="#0497d8"/><text x="2" y="18" font-family="Open Sans" font-size="9.500" font-weight="600" fill="#fff" textLength="12" lengthAdjust="spacingAndGlyphs">my</text><text x="14.500" y="18.500" font-family="Open Sans" font-size="13.500" font-style="italic" font-weight="700" fill="#fff" textLength="13" lengthAdjust="spacingAndGlyphs">hp</text>`))}
      ${this.app(ic(36, 36, svg`<circle cx="15" cy="18" r="14" fill="#0497d8" stroke="#fff" stroke-width="1.800"/><text x="15" y="27.500" text-anchor="middle" font-family="Open Sans" font-size="26" font-weight="700" fill="#fff">?</text><circle cx="26" cy="7" r="10" fill="#ffc20e"/>`))}
      ${this.app(ic(27, 30, svg`<path d="M0 0L13.500 6.500L27 0V23.500L13.500 29.500L0 23.500Z" fill="#c62a2c"/><path d="M5.500 9L13.500 13L21.500 9V19.500L13.500 24L5.500 19.500Z" fill="#202020"/>`))}
      ${this.app(ic(30, 30, svg`<defs><linearGradient id="ad" x1=".8" y1="0" x2=".2" y2="1"><stop offset="0" stop-color="#f03020"/><stop offset=".5" stop-color="#e040d0"/><stop offset="1" stop-color="#4070ff"/></linearGradient><linearGradient id="ae" x1="0" y1="0" x2="0" y2="1"><stop offset="0" stop-color="#f03020"/><stop offset=".5" stop-color="#ffb020"/><stop offset="1" stop-color="#50e070"/></linearGradient></defs><rect width="30" height="30" rx="5" fill="#040b1d"/><path d="M13.500 8L8.500 21.500H13.500L16 17.500L13.500 14Z" fill="url(#ad)" stroke="url(#ad)" stroke-width="2.500" stroke-linejoin="round"/><path d="M13.500 7.500H16L21.500 21.500H18.500L13.500 10Z" fill="url(#ae)" stroke="url(#ae)" stroke-width="2.500" stroke-linejoin="round"/>`))}
      ${this.app(ic(30, 30, svg`<circle cx="15" cy="15" r="15" fill="#fbc116"/><path d="M2 7.500A15 15 0 0 1 28 7.500H15A7.500 7.500 0 0 0 8.500 18.700Z" fill="#e33b2e"/><path d="M2 7.500L8.500 18.750A7.500 7.500 0 0 0 21.500 18.750L15 30A15 15 0 0 1 2 7.500Z" fill="#239a4b"/><circle cx="15" cy="15" r="7.500" fill="#fff"/><circle cx="15" cy="15" r="6" fill="#3a7df0"/>`))}
      ${this.app(wordLogo(29, 28), true)}
      ${this.app(ic(30, 30, svg`<rect width="30" height="30" fill="#4b4b4b"/><rect x="5" y="5" width="20" height="20" rx="1.500" fill="#f08705"/><path d="M14.500 11L10.500 18M15.500 11L19.500 18" stroke="#fff" stroke-width="1.800"/><rect x="12" y="7.500" width="6" height="5" rx="1" fill="#fff"/><rect x="7.500" y="16.500" width="6" height="5" rx="1" fill="#fff"/><rect x="16.500" y="16.500" width="6" height="5" rx="1" fill="#fff"/>`), true)}
      ${this.app(ic(34, 28, svg`<circle cx="15.500" cy="5.500" r="4.500" fill="#7b83eb"/><path d="M21 12H29V20Q29 25 24 25Q21 25 21 22Z" fill="#5059c9"/><path d="M8 12H22.500V20Q22.500 27.500 15.500 27.500T8 20Z" fill="#7b83eb"/><circle cx="28" cy="6" r="6" fill="#fff"/><rect x="0" y="7" width="15" height="15" rx="1.300" fill="#4b53bc"/><text x="7.500" y="18.500" text-anchor="middle" font-family="Open Sans" font-size="11" font-weight="700" fill="#fff">T</text>`), true)}
      ${ic(16, 9, svg`<path d="M.8 8.200L8 1L15.200 8.200" stroke="#fff" stroke-width="1.300"/>`)}
      ${ic(20, 13, svg`<path d="M4 7A5.500 5.500 0 0 1 14 3Q10 8 4 7Z" fill="#9c9c9c"/><circle cx="14" cy="6" r="4.500" fill="#c4c4c4"/><path d="M4 13A3.800 3.800 0 0 1 4 5.500Q7 4 9.500 6L15 8.500Q19.500 8 20 10.500Q20 13 17.500 13Z" fill="#fff"/>`)}
      ${tx("ENG", 28)}
      <div class="tray">
        ${ic(20, 16, svg`<path d="M.8 5.500Q10 -3.500 19.200 5.500M3.500 8.800Q10 2.500 16.500 8.800M6.300 11.700Q10 8 13.700 11.700" stroke="#fff" stroke-width="1.500"/><circle cx="10" cy="14" r="2" fill="#fff"/>`)}
        ${ic(20, 18, svg`<path d="M.8 6H4L8.500 1.500V16.500L4 12H.8Z" stroke="#fff" stroke-width="1.400" stroke-linejoin="round"/><path d="M11 6.500Q13 9 11 11.500" stroke="#fff" stroke-width="1.400"/><path d="M13.500 4Q17 9 13.500 14M16 1.500Q21.500 9 16 16.500" stroke="#777" stroke-width="1.300"/>`)}
        ${ic(20, 13, svg`<rect x=".8" y=".8" width="16" height="11.400" rx="3" stroke="#fff" stroke-width="1.500"/><rect x="3" y="3" width="4.500" height="7" rx="1" fill="#fff"/><path d="M18.500 4V9" stroke="#fff" stroke-width="2"/>`)}
      </div>
      <div class="two right">${tx("2:23 pm", 53)}${tx("13/03/2023", 75)}</div>
      <span class="badge">1</span>
    </div>`;
  }
}

/* ---------- page ---------- */

@customElement("app-root")
class AppRoot extends LitElement {
  static styles = css`
    :host { display: block; position: relative; width: 1920px; height: 1080px; overflow: hidden; background: #efefef; }
    .overlay { position: absolute; left: 1456px; top: 504px; width: 448px; height: 500px; border-radius: 9px; background: #282828; box-shadow: 0 4px 14px rgba(0,0,0,.5), 0 0 1px #111; z-index: 2; }
  `;
  render() {
    return html`
      <word-titlebar></word-titlebar>
      <word-ribbon></word-ribbon>
      <word-document></word-document>
      <word-statusbar></word-statusbar>
      <win-taskbar></win-taskbar>
      <div class="overlay"></div>`;
  }
}
